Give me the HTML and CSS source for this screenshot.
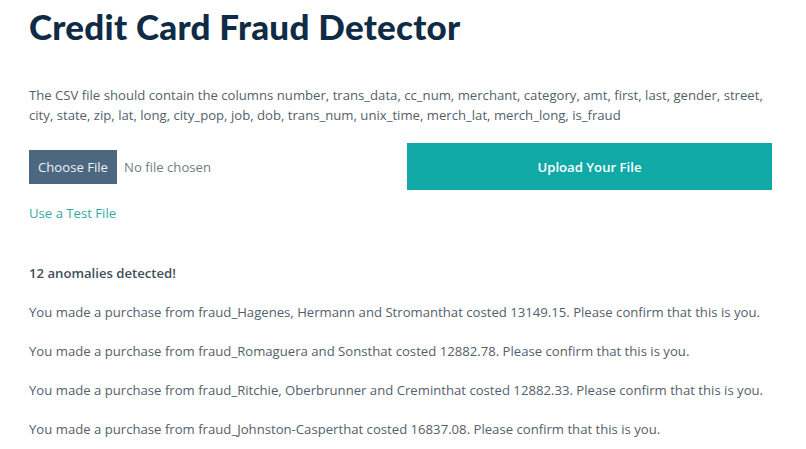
FILE: index.html
```html
<!DOCTYPE html>
<html lang="en">
<head>
<meta charset="utf-8">
<title>Credit Card Fraud Detector</title>
<link rel="stylesheet" href="styles.css">
</head>
<body>
<main class="page">
  <h1 class="title">Credit Card Fraud Detector</h1>
  <p class="intro">The CSV file should contain the columns number, trans_data, cc_num, merchant, category, amt, first, last, gender, street, city, state, zip, lat, long, city_pop, job, dob, trans_num, unix_time, merch_lat, merch_long, is_fraud</p>
  <form class="upload-row">
    <div class="file-picker">
      <label class="choose-btn">Choose File</label>
      <span class="file-name">No file chosen</span>
    </div>
    <button type="button" class="upload-btn">Upload Your File</button>
  </form>
  <a class="test-link" href="#">Use a Test File</a>
  <section class="results">
    <p class="summary">12 anomalies detected!</p>
    <p class="msg">You made a purchase from fraud_Hagenes, Hermann and Stromanthat costed 13149.15. Please confirm that this is you.</p>
    <p class="msg">You made a purchase from fraud_Romaguera and Sonsthat costed 12882.78. Please confirm that this is you.</p>
    <p class="msg">You made a purchase from fraud_Ritchie, Oberbrunner and Creminthat costed 12882.33. Please confirm that this is you.</p>
    <p class="msg">You made a purchase from fraud_Johnston-Casperthat costed 16837.08. Please confirm that this is you.</p>
  </section>
</main>
</body>
</html>
```
FILE: styles.css
```css
html, body {
  margin: 0;
  padding: 0;
  background: #ffffff;
}
body {
  font-family: "Open Sans", "Noto Sans", sans-serif;
  font-size: 13.15px;
  color: #55606b;
}
.page {
  width: 743px;
  padding: 0 0 0 29px;
  display: flex;
  flex-direction: column;
}
.title {
  margin: 4px 0 0 0;
  font-family: "Lato", "Inter", sans-serif;
  font-weight: 900;
  font-size: 35px;
  line-height: 44px;
  color: #0f2b46;
  letter-spacing: 0.25px;
}
.intro {
  margin: 38px 0 0 0;
  line-height: 19.5px;
}
.upload-row {
  margin: 18px 0 0 0;
  display: grid;
  grid-template-columns: 1fr 365px;
  column-gap: 13px;
  align-items: center;
}
.file-picker {
  display: flex;
  align-items: center;
  gap: 7px;
}
.choose-btn {
  background: #4b6880;
  color: #eef2f5;
  height: 34px;
  width: 88px;
  display: flex;
  align-items: center;
  justify-content: center;
}
.file-name {
  color: #737c86;
}
.upload-btn {
  height: 47px;
  border: none;
  background: #10a9a6;
  color: #ffffff;
  font-family: "Open Sans", sans-serif;
  font-weight: 600;
  font-size: 13.15px;
}
.test-link {
  margin-top: 13px;
  align-self: flex-start;
  color: #36a9a8;
  text-decoration: none;
  line-height: 20px;
}
.results {
  margin-top: 40px;
}
.summary {
  margin: 0;
  font-weight: 600;
  line-height: 20px;
  color: #434e59;
}
.msg {
  margin: 19.7px 0 0 0;
  line-height: 19.5px;
}
```
